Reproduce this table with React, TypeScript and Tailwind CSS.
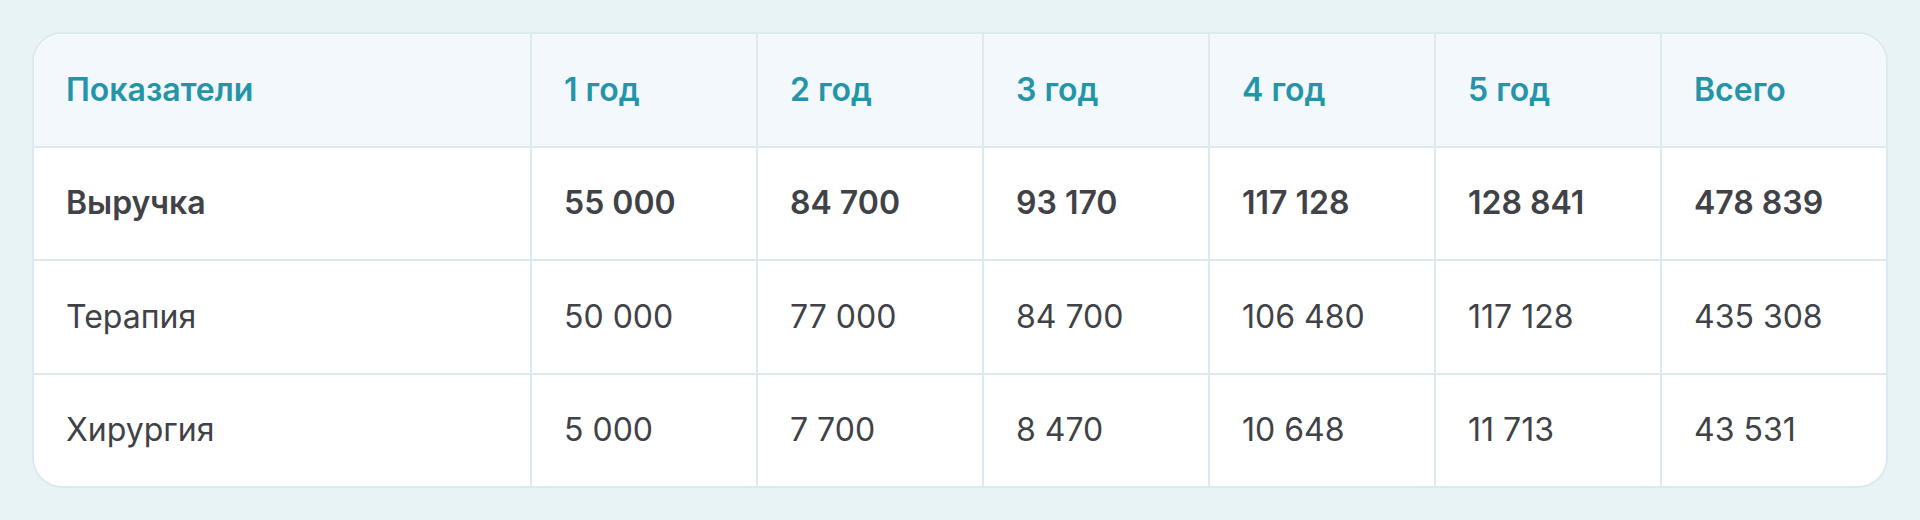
import React from "react";

const headers = ["Показатели", "1 год", "2 год", "3 год", "4 год", "5 год", "Всего"];
const rows: { label: string; values: string[]; bold?: boolean }[] = [
  { label: "Выручка", values: ["55 000", "84 700", "93 170", "117 128", "128 841", "478 839"], bold: true },
  { label: "Терапия", values: ["50 000", "77 000", "84 700", "106 480", "117 128", "435 308"] },
  { label: "Хирургия", values: ["5 000", "7 700", "8 470", "10 648", "11 713", "43 531"] },
];

export default function App() {
  return (
    <div
      className="w-[1920px] h-[520px] bg-[#e8f3f5] p-8"
      style={{ fontFamily: "Inter, 'Noto Sans', sans-serif" }}
    >
      <div className="h-[456px] flex flex-col rounded-[30px] border-2 border-[#dce9ee] bg-white overflow-hidden">
        <div className="flex-1 grid grid-cols-[496px_repeat(6,minmax(0,1fr))] bg-[#f2f8fb]">
          {headers.map((h, i) => (
            <div
              key={h}
              className={`flex items-center px-8 text-[32px] font-semibold text-[#2495a9] ${i > 0 ? "border-l-2 border-[#dce9ee]" : ""}`}
            >
              {h}
            </div>
          ))}
        </div>
        {rows.map((r) => (
          <div
            key={r.label}
            className="flex-1 grid grid-cols-[496px_repeat(6,minmax(0,1fr))] border-t-2 border-[#dce9ee]"
          >
            <div className={`flex items-center px-8 text-[32px] text-[#404247] ${r.bold ? "font-semibold" : "font-normal"}`}>
              {r.label}
            </div>
            {r.values.map((v, i) => (
              <div
                key={i}
                className={`flex items-center px-8 text-[32px] text-[#404247] border-l-2 border-[#dce9ee] ${r.bold ? "font-semibold" : "font-normal"}`}
              >
                {v}
              </div>
            ))}
          </div>
        ))}
      </div>
    </div>
  );
}
